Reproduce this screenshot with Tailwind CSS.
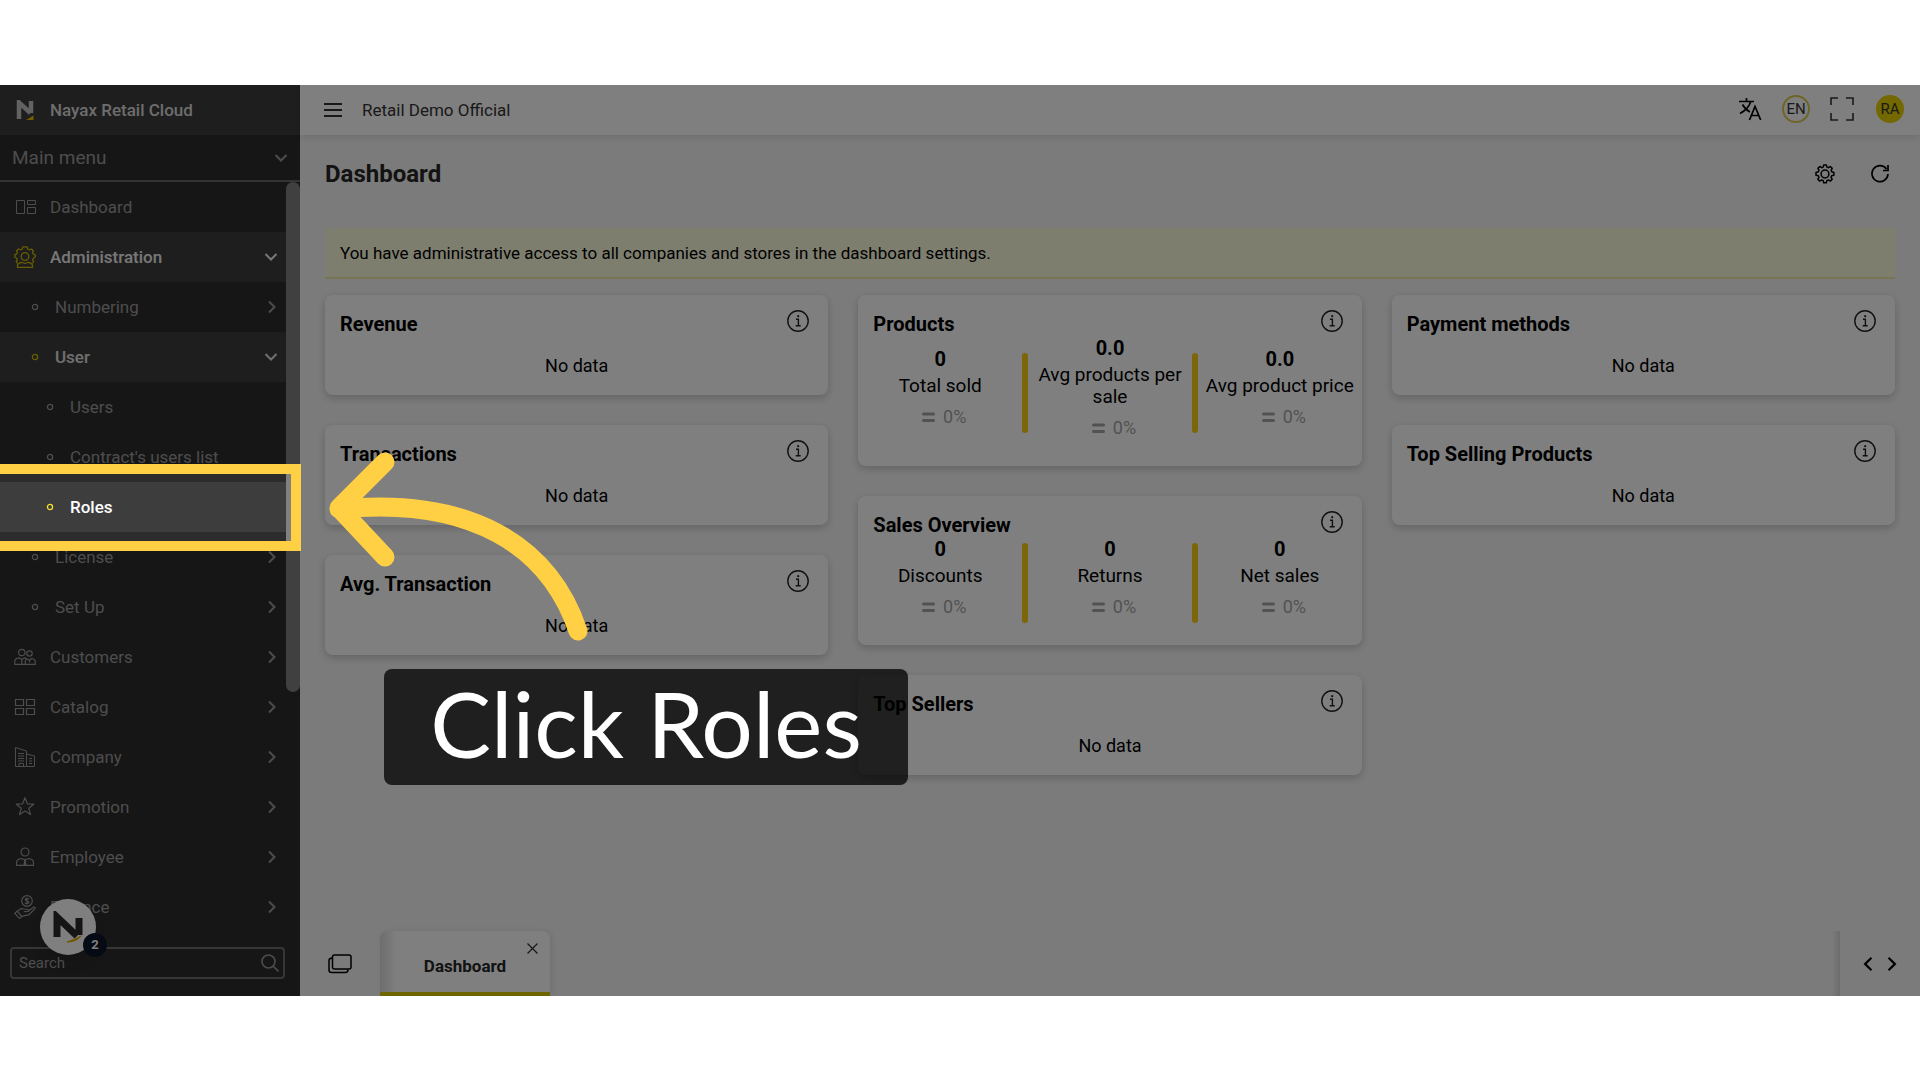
<!DOCTYPE html>
<html lang="en">
<head>
  <meta charset="UTF-8" />
  <meta name="viewport" content="width=device-width, initial-scale=1.0">
  <title>Nayax Retail Cloud - Dashboard</title>
  <script src="https://cdn.jsdelivr.net/npm/@tailwindcss/browser@4"></script>
</head>
<body class="bg-white font-[Roboto,sans-serif] text-[17px] leading-[22px] text-black">

  <!-- Shared icons -->
  <svg class="hidden">
    <symbol id="right" viewBox="0 0 8 14"><path d="M1 1.500 6.500 7 1 12.500" fill="none" stroke="currentColor" stroke-width="2" /></symbol>
    <symbol id="down" viewBox="0 0 14 8"><path d="M1.500 1 7 6.500 12.500 1" fill="none" stroke="currentColor" stroke-width="2" /></symbol>
    <symbol id="dot" viewBox="0 0 8 8"><circle cx="4" cy="4" r="2.600" fill="none" stroke="currentColor" stroke-width="1.300" /></symbol>
    <symbol id="equal" viewBox="0 0 13 11"><path d="M1.500 2h10M1.500 8.500h10" stroke="currentColor" stroke-width="3" stroke-linecap="round" /></symbol>
    <symbol id="info" viewBox="0 0 22 22">
      <circle cx="11" cy="11" r="10.200" fill="none" stroke="currentColor" stroke-width="1.400" />
      <path d="M9 9.300h2.400v6.200M8.700 15.700h5" fill="none" stroke="currentColor" stroke-width="1.400" />
      <circle cx="11.200" cy="6.200" r="1.100" fill="currentColor" />
    </symbol>
  </svg>

  <div class="h-screen flex flex-col pt-[85px] pb-[84px]">
    <div class="relative flex flex-1 min-h-0 overflow-hidden bg-[#f7f7f7]">

      <!-- Sidebar -->
      <aside class="w-[300px] shrink-0 flex flex-col bg-[#2c2c2c] text-[#9a9a9a]">
        <div class="h-[50px] shrink-0 flex items-center gap-4 pl-4 bg-[#3d3d3d] text-[#dadada]">
          <svg class="w-[18px] h-5" viewBox="0 0 18 20">
            <path d="M3 19V2.500L14.500 13M15 13V1" fill="none" stroke="#c4c4c4" stroke-width="4.500" />
            <path d="M10 20 17.500 15.500V20z" fill="#e8b800" />
          </svg>
          <span class="font-medium">Nayax Retail Cloud</span>
        </div>
        <button class="h-[47px] shrink-0 flex items-center justify-between pl-3 pr-3 border-b-2 border-[#686868] text-[19px]">
          Main menu
          <svg class="w-[14px] h-2"><use href="#down" /></svg>
        </button>

        <div class="flex flex-1 min-h-0">
          <nav class="flex-1 overflow-hidden">
            <a href="#" class="h-[50px] flex items-center gap-[14px] pl-[14px] pr-3">
              <svg class="w-[22px] h-[22px]" viewBox="0 0 22 22" fill="none" stroke="currentColor"><path d="M2.500 4.500h8v13h-8zM13.500 4.500h8v4h-8zM13.500 11.500h8v6h-8z" /></svg>
              Dashboard
            </a>
            <a href="#" class="h-[50px] flex items-center gap-[14px] pl-[14px] pr-2 bg-[#3d3d3d] font-medium text-[#f0f0f0]">
              <svg class="w-[22px] h-[22px] text-[#d0ba00]" viewBox="0 0 22 22" fill="none" stroke="currentColor" stroke-width="1.300">
                <path d="M3.500 17.500 2.300 15.600l1-1.600-.6-1.700L.8 11V8.800l1.900-.7.700-1.500-.8-2L4.400 3l1.900.8 1.800-.8L9 .8h4l.8 2.200 1.700.8L17.500 3l1.800 1.600-.8 2 .7 1.500 2 .7V11l-2 1.300-.6 1.700 1 1.600-1.200 1.900" />
                <circle cx="11" cy="10.500" r="3.800" />
                <path d="M3.500 21.400v-2.200c.4-1.500 1.600-2.400 4-2.900 2 1.200 5 1.200 7 0 2.400.5 3.600 1.400 4 2.900v2.200z" />
              </svg>
              <span class="flex-1">Administration</span>
              <svg class="w-[14px] h-2"><use href="#down" /></svg>
            </a>
            <a href="#" class="h-[50px] flex items-center gap-4 pl-[31px] pr-[10px]">
              <svg class="w-2 h-2"><use href="#dot" /></svg>
              <span class="flex-1">Numbering</span>
              <svg class="w-2 h-[14px]"><use href="#right" /></svg>
            </a>
            <a href="#" class="h-[50px] flex items-center gap-4 pl-[31px] pr-2 bg-[#3d3d3d] font-medium text-[#e0e0e0]">
              <svg class="w-2 h-2 text-[#d0ba00]"><use href="#dot" /></svg>
              <span class="flex-1">User</span>
              <svg class="w-[14px] h-2"><use href="#down" /></svg>
            </a>
            <a href="#" class="h-[50px] flex items-center gap-4 pl-[46px]">
              <svg class="w-2 h-2"><use href="#dot" /></svg>
              Users
            </a>
            <a href="#" class="h-[50px] flex items-center gap-4 pl-[46px]">
              <svg class="w-2 h-2"><use href="#dot" /></svg>
              Contract's users list
            </a>
            <a href="#" class="h-[50px] flex items-center gap-4 pl-[46px] bg-[#3d3d3d] font-medium text-white">
              <svg class="w-2 h-2 text-[#f5e02a]"><use href="#dot" /></svg>
              Roles
            </a>
            <a href="#" class="h-[50px] flex items-center gap-4 pl-[31px] pr-[10px]">
              <svg class="w-2 h-2"><use href="#dot" /></svg>
              <span class="flex-1">License</span>
              <svg class="w-2 h-[14px]"><use href="#right" /></svg>
            </a>
            <a href="#" class="h-[50px] flex items-center gap-4 pl-[31px] pr-[10px]">
              <svg class="w-2 h-2"><use href="#dot" /></svg>
              <span class="flex-1">Set Up</span>
              <svg class="w-2 h-[14px]"><use href="#right" /></svg>
            </a>
            <a href="#" class="h-[50px] flex items-center gap-[14px] pl-[14px] pr-[10px]">
              <svg class="w-[22px] h-[22px]" viewBox="0 0 22 22" fill="none" stroke="currentColor" stroke-width="1.200">
                <circle cx="7.800" cy="6.500" r="3.200" /><circle cx="15.500" cy="7.500" r="2.700" />
                <path d="M.8 18.400v-3.200c0-1.800 1.500-3 4.700-3.400l2.300 2 2.300-2c1.500.3 2.200.6 3 1.200l2.400 1.300 2.300-1.800c2.300.3 3.400 1.300 3.400 3v2.900H.8zM11.300 18v-3c0-1 .7-1.700 1.800-2M7.800 14v4M15.500 14.500v2" />
              </svg>
              <span class="flex-1">Customers</span>
              <svg class="w-2 h-[14px]"><use href="#right" /></svg>
            </a>
            <a href="#" class="h-[50px] flex items-center gap-[14px] pl-[14px] pr-[10px]">
              <svg class="w-[22px] h-[22px]" viewBox="0 0 22 22" fill="none" stroke="currentColor" stroke-width="1.200"><path d="M1.500 3.500h8v6h-8zM12.500 3.500h8v6h-8zM1.500 12.500h8v6h-8zM12.500 12.500h8v6h-8z" /></svg>
              <span class="flex-1">Catalog</span>
              <svg class="w-2 h-[14px]"><use href="#right" /></svg>
            </a>
            <a href="#" class="h-[50px] flex items-center gap-[14px] pl-[14px] pr-[10px]">
              <svg class="w-[22px] h-[22px]" viewBox="0 0 22 22" fill="none" stroke="currentColor"><path d="M1.500 20.500v-19l11 3.500v15.500zM12.500 8l8 2v10.500h-8M4 7.500h6M4 10h6M4 12.500h6M4 15h6M5 20.500v-3h4.500v3M15 12.500h3M15 15h3M15 17.500h3" /></svg>
              <span class="flex-1">Company</span>
              <svg class="w-2 h-[14px]"><use href="#right" /></svg>
            </a>
            <a href="#" class="h-[50px] flex items-center gap-[14px] pl-[14px] pr-[10px]">
              <svg class="w-[22px] h-[22px]" viewBox="0 0 22 22" fill="none" stroke="currentColor" stroke-width="1.200" stroke-linejoin="round"><path d="m11 1.700 2.400 6.100 6.300.4-4.900 4.100 1.700 6.300-5.500-3.500-5.500 3.500 1.700-6.300-4.900-4.100 6.300-.4z" /></svg>
              <span class="flex-1">Promotion</span>
              <svg class="w-2 h-[14px]"><use href="#right" /></svg>
            </a>
            <a href="#" class="h-[50px] flex items-center gap-[14px] pl-[14px] pr-[10px]">
              <svg class="w-[22px] h-[22px]" viewBox="0 0 22 22" fill="none" stroke="currentColor" stroke-width="1.200">
                <circle cx="11" cy="6" r="4" />
                <path d="M2.500 19.300v-2.500c0-2.500 2-4 5-4.300 1.700 1.300 5.300 1.300 7 0 3 .3 5 1.800 5 4.300v2.500z" />
                <path d="M10.200 13.500h1.600l.6 5.500H9.600z" fill="currentColor" stroke="none" />
              </svg>
              <span class="flex-1">Employee</span>
              <svg class="w-2 h-[14px]"><use href="#right" /></svg>
            </a>
            <a href="#" class="h-[50px] flex items-center gap-[14px] pl-[14px] pr-[10px]">
              <svg class="w-[22px] h-6" viewBox="0 0 22 24" fill="none" stroke="currentColor" stroke-width="1.200">
                <circle cx="13" cy="6" r="5.300" />
                <path d="M15 4.200c-1.500-1.200-3.800-.7-3.800.6 0 1.600 3.800.8 3.800 2.500 0 1.300-2.500 1.700-4 .5M13 2.500v7" />
                <path d="m.8 18.500 2.200-2.300 5 5.300-2.500 1.800zM3.500 16.500c2-2.500 4-3.500 6-2.500l4.500.5c1.200.3 1 2-.2 2l-4 .2M13.800 16.500l5.700-4.300c1.200-.6 2.200.6 1.300 1.700L15 19.700c-2.500 1-5 .3-7 1.800" />
              </svg>
              <span class="flex-1">Finance</span>
              <svg class="w-2 h-[14px]"><use href="#right" /></svg>
            </a>
          </nav>
          <!-- Scrollbar -->
          <div class="w-[14px] shrink-0">
            <div class="h-[510px] rounded-full bg-[#808080]"></div>
          </div>
        </div>

        <form class="h-8 shrink-0 mt-[15px] mb-[17px] ml-[10px] mr-[15px] flex items-center pl-[7px] pr-1 border-2 border-[#6c6c6c] rounded">
          <input type="search" aria-label="Search menu" placeholder="Search" class="flex-1 min-w-0 h-6 bg-transparent text-[15px] leading-5 placeholder:text-[#9a9a9a]" />
          <button type="button" aria-label="Search">
            <svg class="w-[18px] h-[18px]" viewBox="0 0 18 18" fill="none" stroke="currentColor" stroke-width="1.600"><circle cx="7.500" cy="7.500" r="6.500" /><path d="m12.200 12.200 5.300 5.300" /></svg>
          </button>
        </form>
      </aside>

      <!-- Main -->
      <div class="flex-1 min-w-0 flex flex-col">
        <header class="h-[50px] shrink-0 flex items-center pl-6 pr-4 bg-white shadow-[0_2px_8px_rgba(0,0,0,0.12)] text-[#333]">
          <button aria-label="Toggle menu">
            <svg class="w-[18px] h-[14px]" viewBox="0 0 18 14" stroke="currentColor" stroke-width="2"><path d="M0 1h18M0 7h18M0 13h18" /></svg>
          </button>
          <span class="ml-5 flex-1">Retail Demo Official</span>
          <div class="flex items-center gap-5 pb-[2px] text-[15px]">
            <button aria-label="Translate">
              <svg class="w-6 h-6 text-black" viewBox="0 0 24 24" fill="none" stroke="currentColor" stroke-width="1.700"><path d="M1 4.500h15M8.500 1v3.500M12.700 4.500C11.500 9 7.500 13.500 2 16.500M4.500 7.500c1.500 3 4 5.500 7.500 7.500M11.500 23l5.500-13.500L22.700 23M13.500 18.500h7.200" /></svg>
            </button>
            <button class="w-7 h-7 rounded-full border-2 border-[#dccb52]">EN</button>
            <button aria-label="Full screen">
              <svg class="w-6 h-6" viewBox="0 0 24 24" fill="none" stroke="currentColor" stroke-width="1.600"><path d="M1 8V1h7M16 1h7v7M23 16v7h-7M8 23H1v-7" /></svg>
            </button>
            <button class="ml-[2px] w-7 h-7 rounded-full bg-[#e6d200]">RA</button>
          </div>
        </header>

        <main class="flex-1 px-[25px]">
          <div class="h-[93px] flex items-start pt-[25px]">
            <h1 class="flex-1 text-2xl leading-[28px] font-bold text-[#262626]">Dashboard</h1>
            <div class="flex items-center gap-9 pt-1 pr-[6px]">
              <button aria-label="Settings">
                <svg class="w-5 h-5" viewBox="0 0 20 20" fill="none" stroke="currentColor" stroke-width="1.500" stroke-linejoin="round">
                  <path d="m8.700 1-.5 2.100-1.500.6-1.900-1.200-1.900 1.900 1.100 1.900-.6 1.500L1 8.500v2.700l2.300.6.700 1.500-1.200 1.900 1.900 1.900 2-1.200 1.500.7.500 2.200h2.600l.6-2.200 1.500-.7 1.900 1.200 1.900-1.900-1.200-1.900.7-1.500 2.200-.6V8.500l-2.200-.7-.6-1.500 1.100-1.900-1.900-1.900-1.900 1.200-1.500-.6L11.300 1z" />
                  <circle cx="10" cy="10" r="3.900" />
                </svg>
              </button>
              <button aria-label="Refresh">
                <svg class="w-[18px] h-5" viewBox="0 0 18 20" fill="none" stroke="currentColor" stroke-width="1.700"><path d="M15.500 5A8 8 0 1 0 17 10M17 1v5.500h-5" /></svg>
              </button>
            </div>
          </div>

          <p class="h-[51px] flex items-center px-[15px] bg-[#fcfcdf] border-b-2 border-[#efeaa8]">You have administrative access to all companies and stores in the dashboard settings.</p>

          <div class="mt-4 grid grid-cols-3 gap-[30px] items-start text-lg leading-[22px]">
            <div class="space-y-[30px]">
              <section class="pb-[17px] rounded-lg bg-white shadow-[0_3px_8px_rgba(0,0,0,0.2)]">
                <div class="h-[42px] flex items-end justify-between pl-[15px] pr-[19px]">
                  <h2 class="pb-[2px] text-xl leading-[22px] font-bold">Revenue</h2>
                  <button aria-label="About revenue" class="pb-[5px] text-[#222]"><svg class="w-[22px] h-[22px]"><use href="#info" /></svg></button>
                </div>
                <p class="pt-[18px] pb-px text-center">No data</p>
              </section>
              <section class="pb-[17px] rounded-lg bg-white shadow-[0_3px_8px_rgba(0,0,0,0.2)]">
                <div class="h-[42px] flex items-end justify-between pl-[15px] pr-[19px]">
                  <h2 class="pb-[2px] text-xl leading-[22px] font-bold">Transactions</h2>
                  <button aria-label="About transactions" class="pb-[5px] text-[#222]"><svg class="w-[22px] h-[22px]"><use href="#info" /></svg></button>
                </div>
                <p class="pt-[18px] pb-px text-center">No data</p>
              </section>
              <section class="pb-[17px] rounded-lg bg-white shadow-[0_3px_8px_rgba(0,0,0,0.2)]">
                <div class="h-[42px] flex items-end justify-between pl-[15px] pr-[19px]">
                  <h2 class="pb-[2px] text-xl leading-[22px] font-bold">Avg. Transaction</h2>
                  <button aria-label="About average transaction" class="pb-[5px] text-[#222]"><svg class="w-[22px] h-[22px]"><use href="#info" /></svg></button>
                </div>
                <p class="pt-[18px] pb-px text-center">No data</p>
              </section>
            </div>

            <div class="space-y-[30px]">
              <section class="pb-[17px] rounded-lg bg-white shadow-[0_3px_8px_rgba(0,0,0,0.2)]">
                <div class="h-[42px] flex items-end justify-between pl-[15px] pr-[19px]">
                  <h2 class="pb-[2px] text-xl leading-[22px] font-bold">Products</h2>
                  <button aria-label="About products" class="pb-[5px] text-[#222]"><svg class="w-[22px] h-[22px]"><use href="#info" /></svg></button>
                </div>
                <div class="flex items-center text-center">
                  <div class="flex-1 pb-[10px]">
                    <p class="text-xl leading-[22px] font-bold">0</p>
                    <p class="mt-[5px] text-[19px] leading-[22px]">Total sold</p>
                    <p class="mt-[9px] flex items-center justify-center gap-2 pl-2 text-[#a5a5a5]"><svg class="w-[13px] h-[11px]"><use href="#equal" /></svg>0%</p>
                  </div>
                  <div class="w-[6px] h-20 rounded-full bg-[#fbca14]"></div>
                  <div class="flex-1 pb-[10px]">
                    <p class="text-xl leading-[22px] font-bold">0.0</p>
                    <p class="mt-[5px] px-1 text-[19px] leading-[22px]">Avg products per sale</p>
                    <p class="mt-[9px] flex items-center justify-center gap-2 pl-2 text-[#a5a5a5]"><svg class="w-[13px] h-[11px]"><use href="#equal" /></svg>0%</p>
                  </div>
                  <div class="w-[6px] h-20 rounded-full bg-[#fbca14]"></div>
                  <div class="flex-1 pb-[10px]">
                    <p class="text-xl leading-[22px] font-bold">0.0</p>
                    <p class="mt-[5px] text-[19px] leading-[22px]">Avg product price</p>
                    <p class="mt-[9px] flex items-center justify-center gap-2 pl-2 text-[#a5a5a5]"><svg class="w-[13px] h-[11px]"><use href="#equal" /></svg>0%</p>
                  </div>
                </div>
              </section>
              <section class="pb-[17px] rounded-lg bg-white shadow-[0_3px_8px_rgba(0,0,0,0.2)]">
                <div class="h-[42px] flex items-end justify-between pl-[15px] pr-[19px]">
                  <h2 class="pb-[2px] text-xl leading-[22px] font-bold">Sales Overview</h2>
                  <button aria-label="About sales overview" class="pb-[5px] text-[#222]"><svg class="w-[22px] h-[22px]"><use href="#info" /></svg></button>
                </div>
                <div class="flex items-center text-center">
                  <div class="flex-1 pb-[10px]">
                    <p class="text-xl leading-[22px] font-bold">0</p>
                    <p class="mt-[5px] text-[19px] leading-[22px]">Discounts</p>
                    <p class="mt-[9px] flex items-center justify-center gap-2 pl-2 text-[#a5a5a5]"><svg class="w-[13px] h-[11px]"><use href="#equal" /></svg>0%</p>
                  </div>
                  <div class="w-[6px] h-20 rounded-full bg-[#fbca14]"></div>
                  <div class="flex-1 pb-[10px]">
                    <p class="text-xl leading-[22px] font-bold">0</p>
                    <p class="mt-[5px] text-[19px] leading-[22px]">Returns</p>
                    <p class="mt-[9px] flex items-center justify-center gap-2 pl-2 text-[#a5a5a5]"><svg class="w-[13px] h-[11px]"><use href="#equal" /></svg>0%</p>
                  </div>
                  <div class="w-[6px] h-20 rounded-full bg-[#fbca14]"></div>
                  <div class="flex-1 pb-[10px]">
                    <p class="text-xl leading-[22px] font-bold">0</p>
                    <p class="mt-[5px] text-[19px] leading-[22px]">Net sales</p>
                    <p class="mt-[9px] flex items-center justify-center gap-2 pl-2 text-[#a5a5a5]"><svg class="w-[13px] h-[11px]"><use href="#equal" /></svg>0%</p>
                  </div>
                </div>
              </section>
              <section class="pb-[17px] rounded-lg bg-white shadow-[0_3px_8px_rgba(0,0,0,0.2)]">
                <div class="h-[42px] flex items-end justify-between pl-[15px] pr-[19px]">
                  <h2 class="pb-[2px] text-xl leading-[22px] font-bold">Top Sellers</h2>
                  <button aria-label="About top sellers" class="pb-[5px] text-[#222]"><svg class="w-[22px] h-[22px]"><use href="#info" /></svg></button>
                </div>
                <p class="pt-[18px] pb-px text-center">No data</p>
              </section>
            </div>

            <div class="space-y-[30px]">
              <section class="pb-[17px] rounded-lg bg-white shadow-[0_3px_8px_rgba(0,0,0,0.2)]">
                <div class="h-[42px] flex items-end justify-between pl-[15px] pr-[19px]">
                  <h2 class="pb-[2px] text-xl leading-[22px] font-bold">Payment methods</h2>
                  <button aria-label="About payment methods" class="pb-[5px] text-[#222]"><svg class="w-[22px] h-[22px]"><use href="#info" /></svg></button>
                </div>
                <p class="pt-[18px] pb-px text-center">No data</p>
              </section>
              <section class="pb-[17px] rounded-lg bg-white shadow-[0_3px_8px_rgba(0,0,0,0.2)]">
                <div class="h-[42px] flex items-end justify-between pl-[15px] pr-[19px]">
                  <h2 class="pb-[2px] text-xl leading-[22px] font-bold">Top Selling Products</h2>
                  <button aria-label="About top selling products" class="pb-[5px] text-[#222]"><svg class="w-[22px] h-[22px]"><use href="#info" /></svg></button>
                </div>
                <p class="pt-[18px] pb-px text-center">No data</p>
              </section>
            </div>
          </div>
        </main>

        <!-- Open tabs -->
        <footer class="h-[65px] shrink-0 flex">
          <button aria-label="All tabs" class="w-20 pl-7">
            <svg class="w-6 h-5" viewBox="0 0 24 20" fill="none" stroke="currentColor" stroke-width="1.500"><rect x="4.500" y="1" width="18.500" height="14" rx="2" /><path d="M4.500 4C2 4 1 4.500 1 6.500V16c0 2 1 2.500 2.500 2.500h14c1.800 0 2.500-.8 2.500-3" /></svg>
          </button>
          <div class="relative w-[170px] flex items-center justify-center rounded-t-lg border-b-4 border-[#dcc800] bg-linear-to-r from-[#dcdcdc] to-white to-10% shadow-[2px_0_6px_rgba(0,0,0,0.1)]">
            <a href="#" class="font-bold text-[#262626] pt-2">Dashboard</a>
            <button aria-label="Close tab" class="absolute top-3 right-3">
              <svg class="w-[11px] h-[11px]" viewBox="0 0 11 11" stroke="#333" stroke-width="1.300"><path d="m.5.5 10 10M10.500.5l-10 10" /></svg>
            </button>
          </div>
          <div class="flex-1"></div>
          <div class="w-2 bg-linear-to-l from-[#d8d8d8] to-[#f7f7f7]"></div>
          <div class="w-20 flex items-center justify-center gap-[14px]">
            <button aria-label="Previous tabs"><svg class="w-[10px] h-4 rotate-180"><use href="#right" /></svg></button>
            <button aria-label="Next tabs"><svg class="w-[10px] h-4"><use href="#right" /></svg></button>
          </div>
        </footer>
      </div>

      <!-- Chat widget -->
      <button aria-label="Open help, 2 new" class="absolute left-10 bottom-[41px] w-14 h-14 rounded-full bg-white shadow-lg">
        <svg class="w-8 h-8 mx-auto" viewBox="0 0 32 32" fill="none">
          <path d="M5 26V6L25 25M27 24V7" stroke="#2a2a2a" stroke-width="7" />
          <path d="M15 31c6 0 11-2 14-6l-6 3z" fill="#f0c000" stroke="#d8ad00" />
        </svg>
        <span class="absolute -right-[11px] -bottom-[2px] w-6 h-6 rounded-full bg-[#0b1528] text-white text-[13px] leading-6 font-bold">2</span>
      </button>

      <!-- Dimmed page with the highlighted menu item left clear -->
      <div class="absolute -left-[10px] top-[379px] w-[311px] h-[87px] border-[10px] border-[#ffd043] shadow-[0_0_0_3000px_rgba(0,0,0,0.5)]"></div>

      <svg class="absolute left-[320px] top-[359px] w-[280px] h-[210px]" viewBox="320 444 280 210" fill="none" stroke="#ffd043" stroke-width="19" stroke-linecap="round" stroke-linejoin="round">
        <path d="M385 462 339 508 385 557M339 509C470 496 549 545 578 631" />
      </svg>

      <div class="absolute left-[384px] top-[584px] w-[524px] h-[116px] flex items-center justify-center pb-2 rounded-lg bg-black/75 font-[Lato,sans-serif] text-[91px] leading-[108px] text-white whitespace-nowrap">Click Roles</div>
    </div>
  </div>
</body>
</html>
